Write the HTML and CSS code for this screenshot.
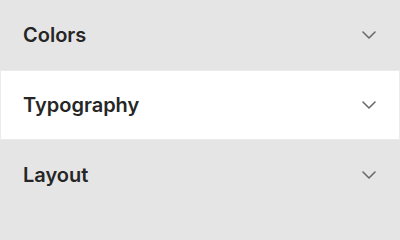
FILE: index.html
```html
<!DOCTYPE html>
<html lang="en">
<head>
<meta charset="utf-8">
<link rel="stylesheet" href="styles.css">
</head>
<body>
<div class="accordion">
  <div class="item">
    <span class="label">Colors</span>
    <svg class="chev" width="14" height="8" viewBox="0 0 14 8"><path d="M1 1 L7 7 L13 1" fill="none" stroke="#6b6b6b" stroke-width="1.6" stroke-linecap="round" stroke-linejoin="round"/></svg>
  </div>
  <div class="item active">
    <span class="label">Typography</span>
    <svg class="chev" width="14" height="8" viewBox="0 0 14 8"><path d="M1 1 L7 7 L13 1" fill="none" stroke="#6b6b6b" stroke-width="1.6" stroke-linecap="round" stroke-linejoin="round"/></svg>
  </div>
  <div class="item">
    <span class="label">Layout</span>
    <svg class="chev" width="14" height="8" viewBox="0 0 14 8"><path d="M1 1 L7 7 L13 1" fill="none" stroke="#6b6b6b" stroke-width="1.6" stroke-linecap="round" stroke-linejoin="round"/></svg>
  </div>
</div>
</body>
</html>
```
FILE: styles.css
```css
html, body {
  margin: 0;
  padding: 0;
  background: #e5e5e5;
}
.accordion {
  width: 400px;
  display: flex;
  flex-direction: column;
  font-family: Inter, "Liberation Sans", sans-serif;
}
.item {
  box-sizing: border-box;
  height: 70px;
  display: flex;
  align-items: center;
  justify-content: space-between;
  padding: 0 24px 0 23px;
  background: #e5e5e5;
}
.item.active {
  background: #ffffff;
  border: 1px solid #ebebeb;
  padding: 0 23px 0 22px;
}
.label {
  font-size: 20px;
  font-weight: 600;
  color: #262626;
}
.chev {
  display: block;
}
```
